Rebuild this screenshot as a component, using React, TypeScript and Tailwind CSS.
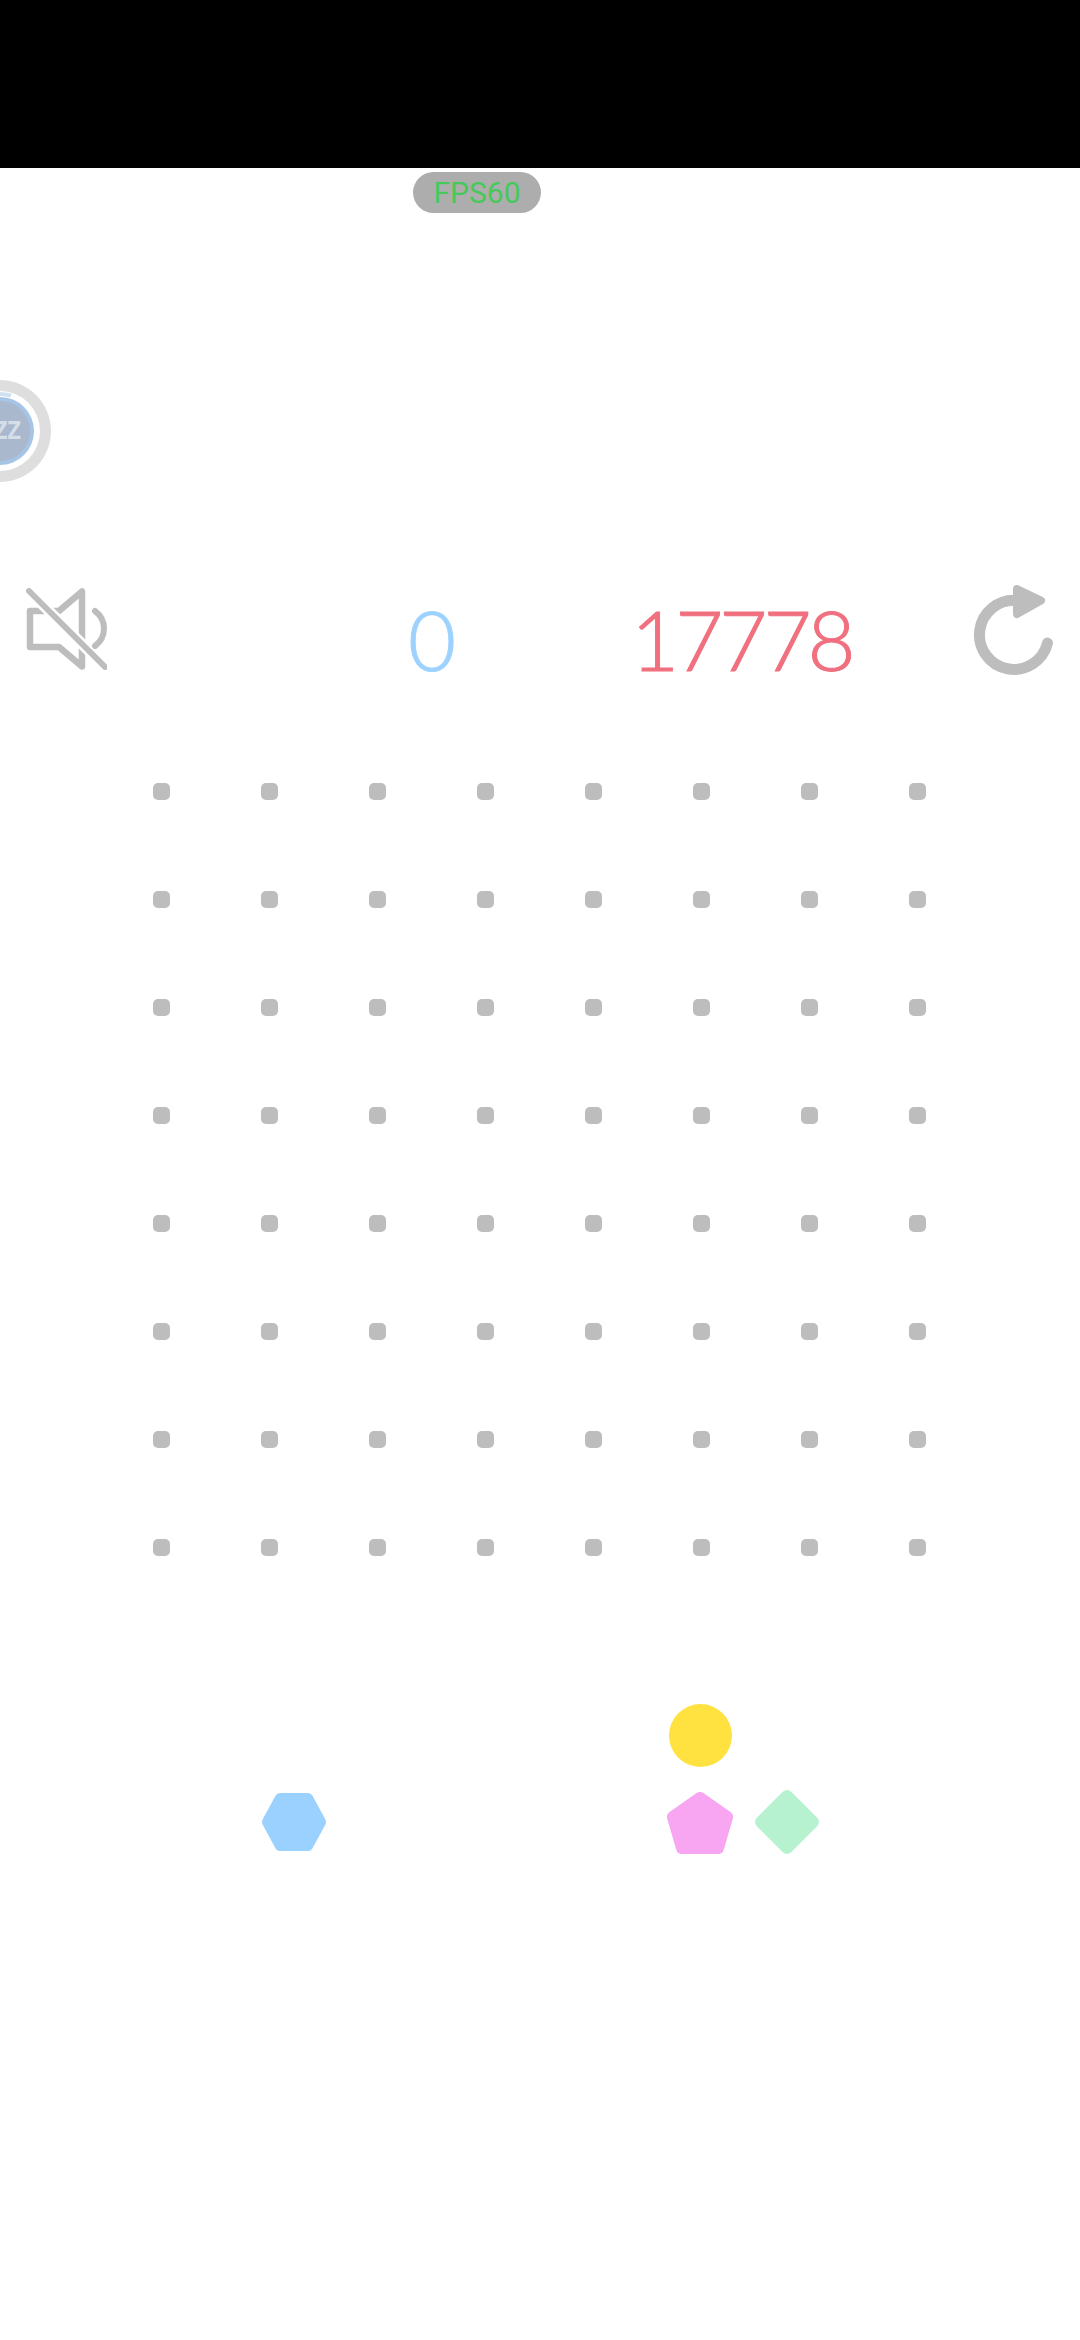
import React from 'react';

const dots = Array.from({ length: 64 });

const MuteIcon = () => (
  <svg width="81" height="82" viewBox="0 0 81 82" fill="none" strokeLinecap="round" strokeLinejoin="round">
    <path d="M56 3.5 L56 78.5 L33 59 L4 59 L4 23 L33 23 Z" stroke="#bdbdbd" strokeWidth="6.5" />
    <path d="M3 3 L79 79" stroke="#ffffff" strokeWidth="11" strokeLinecap="butt" />
    <path d="M3 3 L79 79" stroke="#bdbdbd" strokeWidth="6" />
    <path d="M69 23 C81 32 81 49 69 58" stroke="#bdbdbd" strokeWidth="6" />
  </svg>
);

const RefreshIcon = () => (
  <svg width="80" height="91" viewBox="0 0 80 91" fill="none" strokeLinecap="round" strokeLinejoin="round">
    <path d="M74.5 59 A34.5 34.5 0 1 1 44 16.5" stroke="#bdbdbd" strokeWidth="11" />
    <path d="M44 5 L68 16.5 L44 30 Z" fill="#bdbdbd" stroke="#bdbdbd" strokeWidth="8" />
  </svg>
);

const Hexagon = () => (
  <svg width="66" height="58" viewBox="0 0 66 58" className="block">
    <path d="M19 5 L47 5 L60 29 L47 53 L19 53 L6 29 Z" fill="#9ad1ff" stroke="#9ad1ff" strokeWidth="10" strokeLinejoin="round" />
  </svg>
);

const Pentagon = () => (
  <svg width="66" height="62" viewBox="0 0 66 62" className="block">
    <path d="M33 6 L60 25 L51 56 L15 56 L6 25 Z" fill="#f9a6f2" stroke="#f9a6f2" strokeWidth="12" strokeLinejoin="round" />
  </svg>
);

const Diamond = () => (
  <svg width="66" height="66" viewBox="0 0 66 66" className="block">
    <path d="M33 7 L59 33 L33 59 L7 33 Z" fill="#b7f2d0" stroke="#b7f2d0" strokeWidth="12" strokeLinejoin="round" />
  </svg>
);

export default function App() {
  return (
    <div className="relative w-[1080px] h-[2340px] overflow-hidden bg-white" style={{ fontFamily: 'Roboto, sans-serif' }}>
      <div className="h-[168px] bg-black" />

      {/* fps pill */}
      <div className="mt-1 ml-[413px] flex h-[41px] w-[128px] items-center justify-center rounded-full bg-[#adadad] text-[30px] leading-none text-[#47c85a]">
        FPS60
      </div>

      {/* floating ball, hangs off the left edge */}
      <div className="absolute left-[-51px] top-[380px] flex h-[102px] w-[102px] items-center justify-center rounded-full bg-[#dedede]">
        <div className="flex h-[80px] w-[80px] items-center justify-center rounded-full bg-white">
          <div className="flex h-[68px] w-[68px] items-center justify-center rounded-full bg-[#a6c4e6]">
            <div className="flex h-[60px] w-[60px] items-center justify-center rounded-full bg-[#a9b8cc] text-[24px] font-bold leading-none tracking-[-1px] text-[#d5dde8]" style={{ fontFamily: '"DejaVu Sans Mono", monospace' }}>
              ZZZ
            </div>
          </div>
        </div>
        <svg width="102" height="102" viewBox="0 0 102 102" fill="none" className="absolute left-0 top-0">
          <path d="M51 14 A37 37 0 0 1 62 15.7" stroke="#cfe0f2" strokeWidth="4" />
        </svg>
      </div>

      {/* score row */}
      <div className="mt-[371px] flex h-[91px] items-start">
        <div className="ml-[26px] mt-1 w-[81px]">
          <MuteIcon />
        </div>
        <div className="ml-[301px] mt-[19px] w-[223px] text-[83px] font-light leading-[72px] tracking-[-4px] text-[#9dd2ff] [-webkit-text-stroke:1px_#9dd2ff]" style={{ fontFamily: 'Lato, sans-serif' }}>
          0
        </div>
        <div className="mt-[19px] w-[342px] text-[83px] font-light leading-[72px] tracking-[-4px] text-[#f0707f] [-webkit-text-stroke:1px_#f0707f]" style={{ fontFamily: 'Lato, sans-serif' }}>
          17778
        </div>
        <RefreshIcon />
      </div>

      {/* board */}
      <div className="ml-[153px] mt-[108px] grid w-[773px] grid-cols-8 gap-[91px]">
        {dots.map((_, i) => (
          <div key={i} className="h-[17px] w-[17px] rounded-[5px] bg-[#bdbdbd]" />
        ))}
      </div>

      {/* pieces */}
      <div className="mt-[148px] flex items-end">
        <div className="mb-[3px] ml-[261px]">
          <Hexagon />
        </div>
        <div className="ml-[340px] flex flex-col items-center gap-[25px]">
          <div className="h-[63px] w-[63px] rounded-full bg-[#ffe23f]" />
          <Pentagon />
        </div>
        <div className="ml-[21px] mb-[-1px]">
          <Diamond />
        </div>
      </div>
    </div>
  );
}
